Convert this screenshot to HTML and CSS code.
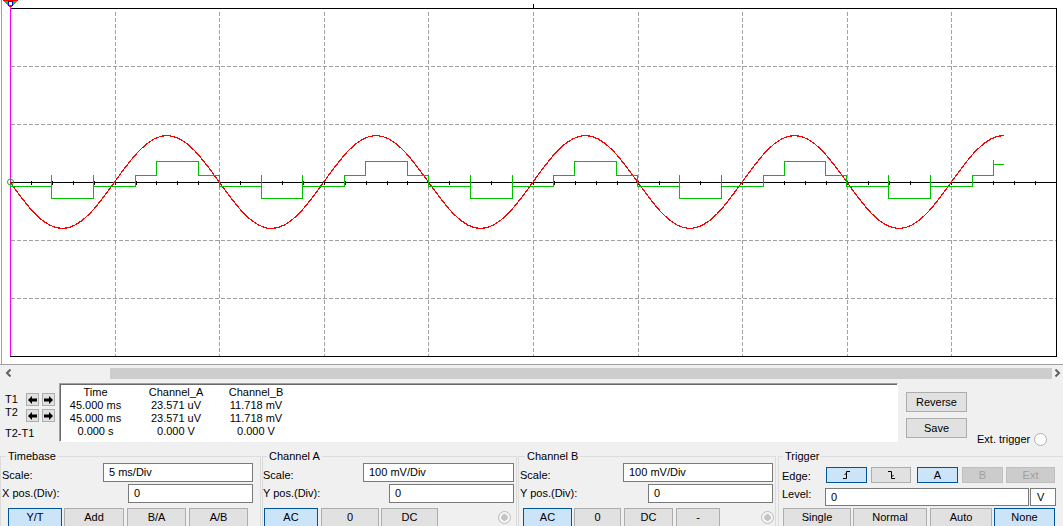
FILE: index.html
```html
<!DOCTYPE html>
<html>
<head>
<meta charset="utf-8">
<link rel="stylesheet" href="styles.css">
</head>
<body>
<div class="scope">
  <svg class="plot" width="1063" height="365" viewBox="0 0 1063 365">
    <g shape-rendering="crispEdges">
      <line x1="1.5" y1="0" x2="1.5" y2="364" stroke="#a0a0a0"/>
      <line x1="0" y1="364.5" x2="1063" y2="364.5" stroke="#a0a0a0"/>
      <g stroke="#a0a0a0" stroke-dasharray="4 2">
        <line x1="115.1" y1="12" x2="115.1" y2="356"/>
        <line x1="219.7" y1="12" x2="219.7" y2="356"/>
        <line x1="324.3" y1="12" x2="324.3" y2="356"/>
        <line x1="428.9" y1="12" x2="428.9" y2="356"/>
        <line x1="533.5" y1="12" x2="533.5" y2="356"/>
        <line x1="638.1" y1="12" x2="638.1" y2="356"/>
        <line x1="742.7" y1="12" x2="742.7" y2="356"/>
        <line x1="847.3" y1="12" x2="847.3" y2="356"/>
        <line x1="951.9" y1="12" x2="951.9" y2="356"/>
        <line x1="11" y1="66.5" x2="1056" y2="66.5"/>
        <line x1="11" y1="124.5" x2="1056" y2="124.5"/>
        <line x1="11" y1="240.5" x2="1056" y2="240.5"/>
        <line x1="11" y1="298.5" x2="1056" y2="298.5"/>
      </g>
      <g stroke="#000">
        <line x1="10" y1="8.5" x2="1057" y2="8.5"/>
        <line x1="10" y1="356.5" x2="1057" y2="356.5"/>
        <line x1="1056.5" y1="8" x2="1056.5" y2="357"/>
        <line x1="533.5" y1="4" x2="533.5" y2="8"/>
        <line x1="10" y1="182.5" x2="1057" y2="182.5"/>
        <line x1="10" y1="182.5" x2="1057" y2="182.5" stroke-width="4" stroke-dasharray="1 19.92"/>
      </g>
      <line x1="10.5" y1="0" x2="10.5" y2="356" stroke="#ff00ff"/>
      <path fill="none" stroke="#ff0000" stroke-width="1.2" d="M10,182 c17.06,23.82 33.37,46.5 52.3,46.5 c18.93,0 35.24,-22.68 52.3,-46.5 c17.06,-23.82 33.37,-46.5 52.3,-46.5 c18.93,0 35.24,22.68 52.3,46.5 c17.06,23.82 33.37,46.5 52.3,46.5 c18.93,0 35.24,-22.68 52.3,-46.5 c17.06,-23.82 33.37,-46.5 52.3,-46.5 c18.93,0 35.24,22.68 52.3,46.5 c17.06,23.82 33.37,46.5 52.3,46.5 c18.93,0 35.24,-22.68 52.3,-46.5 c17.06,-23.82 33.37,-46.5 52.3,-46.5 c18.93,0 35.24,22.68 52.3,46.5 c17.06,23.82 33.37,46.5 52.3,46.5 c18.93,0 35.24,-22.68 52.3,-46.5 c17.06,-23.82 33.37,-46.5 52.3,-46.5 c18.93,0 35.24,22.68 52.3,46.5 c17.06,23.82 33.37,46.5 52.3,46.5 c18.93,0 35.24,-22.68 52.3,-46.5 c17.06,-23.82 33.37,-46.5 52.3,-46.5"/>
      <path fill="none" stroke="#00c000" d="M10,186.5 h41.84V175V198.5h41.84V175V186.5h41.84V175.5h20.92V161.5h41.84V175.5h20.92V186.5 h41.84V175V198.5h41.84V175V186.5h41.84V175.5h20.92V161.5h41.84V175.5h20.92V186.5 h41.84V175V198.5h41.84V175V186.5h41.84V175.5h20.92V161.5h41.84V175.5h20.92V186.5 h41.84V175V198.5h41.84V175V186.5h41.84V175.5h20.92V161.5h41.84V175.5h20.92V186.5 h41.84V175V198.5h41.84V175V186.5h41.84V175.5h20.92V160V164.5h10.46"/>
      <polygon points="3,0 18,0 10.5,8" fill="#00d000"/>
      <line x1="3" y1="0.5" x2="18" y2="0.5" stroke="#ff0000"/>
      <rect x="8.5" y="1.5" width="4" height="4" fill="#fff" stroke="#0000ff"/>
      <rect x="9" y="5" width="3" height="2" fill="#ff0000"/>
    </g>
    <circle cx="10.5" cy="182" r="3" fill="none" stroke="#00c000"/>
  </svg>
</div>

<div class="hscroll">
  <div class="sb-btn"><svg width="7" height="8" viewBox="0 0 7 8"><polyline points="5.5,0.5 2,4 5.5,7.5" fill="none" stroke="#606060" stroke-width="2"/></svg></div>
  <div class="sb-track"><div class="sb-thumb"></div></div>
  <div class="sb-btn sb-right"><svg width="7" height="8" viewBox="0 0 7 8"><polyline points="1.5,0.5 5,4 1.5,7.5" fill="none" stroke="#606060" stroke-width="2"/></svg></div>
</div>

<div class="readrow">
  <div class="cursors">
    <div class="crow">
      <span class="clabel">T1</span>
      <span class="abtn"><svg width="9" height="8" viewBox="0 0 9 8"><path d="M0,4 L4,0 V2.5 H9 V5.5 H4 V8 Z"/></svg></span>
      <span class="abtn"><svg width="9" height="8" viewBox="0 0 9 8"><path d="M9,4 L5,0 V2.5 H0 V5.5 H5 V8 Z"/></svg></span>
    </div>
    <div class="crow c2">
      <span class="clabel">T2</span>
      <span class="abtn"><svg width="9" height="8" viewBox="0 0 9 8"><path d="M0,4 L4,0 V2.5 H9 V5.5 H4 V8 Z"/></svg></span>
      <span class="abtn"><svg width="9" height="8" viewBox="0 0 9 8"><path d="M9,4 L5,0 V2.5 H0 V5.5 H5 V8 Z"/></svg></span>
    </div>
    <div class="cdiff">T2-T1</div>
  </div>
  <div class="readout">
    <span>Time</span><span>Channel_A</span><span>Channel_B</span>
    <span>45.000 ms</span><span>23.571 uV</span><span>11.718 mV</span>
    <span>45.000 ms</span><span>23.571 uV</span><span>11.718 mV</span>
    <span>0.000 s</span><span>0.000 V</span><span>0.000 V</span>
  </div>
  <div class="side">
    <div class="btn wide">Reverse</div>
    <div class="btn wide">Save</div>
  </div>
  <div class="ext"><span>Ext. trigger</span><span class="radio"></span></div>
</div>

<div class="controls">
  <fieldset class="grp g-time">
    <legend>Timebase</legend>
    <div class="row r1"><span class="lbl">Scale:</span><div class="field w150">5 ms/Div</div></div>
    <div class="row r2"><span class="lbl">X pos.(Div):</span><div class="field w125">0</div></div>
    <div class="btns">
      <div class="btn sel w54">Y/T</div>
      <div class="btn w60 ml2">Add</div>
      <div class="btn w59 ml3">B/A</div>
      <div class="btn w59 ml3">A/B</div>
    </div>
  </fieldset>
  <fieldset class="grp g-a">
    <legend>Channel A</legend>
    <div class="row r1"><span class="lbl">Scale:</span><div class="field w151">100 mV/Div</div></div>
    <div class="row r2"><span class="lbl">Y pos.(Div):</span><div class="field w125">0</div></div>
    <div class="btns">
      <div class="btn sel w54">AC</div>
      <div class="btn w58 ml3">0</div>
      <div class="btn w57 ml2">DC</div>
      <span class="dradio"></span>
    </div>
  </fieldset>
  <fieldset class="grp g-b">
    <legend>Channel B</legend>
    <div class="row r1"><span class="lbl">Scale:</span><div class="field w150">100 mV/Div</div></div>
    <div class="row r2"><span class="lbl">Y pos.(Div):</span><div class="field w125">0</div></div>
    <div class="btns">
      <div class="btn sel w49">AC</div>
      <div class="btn w47 ml2">0</div>
      <div class="btn w49 ml3">DC</div>
      <div class="btn w44 ml3">-</div>
      <span class="dradio"></span>
    </div>
  </fieldset>
  <fieldset class="grp g-trig">
    <legend>Trigger</legend>
    <div class="row r1">
      <span class="lbl">Edge:</span>
      <div class="btn sel w41"><svg width="9" height="8" viewBox="0 0 9 8"><path d="M1,7.5 H4.5 V0.5 H8 M2.5,4 L4.5,2" fill="none" stroke="#000"/></svg></div>
      <div class="btn w40 ml4"><svg width="9" height="8" viewBox="0 0 9 8"><path d="M1,0.5 H4.5 V7.5 H8 M4.5,6 L6.5,4" fill="none" stroke="#000"/></svg></div>
      <div class="btn sel w41 ml6">A</div>
      <div class="btn dis w41 ml4">B</div>
      <div class="btn dis w49 ml3">Ext</div>
    </div>
    <div class="row r2">
      <span class="lbl">Level:</span>
      <div class="field w204">0</div>
      <div class="field vbox">V</div>
    </div>
    <div class="btns">
      <div class="btn w68">Single</div>
      <div class="btn w74 ml2">Normal</div>
      <div class="btn w62 ml3">Auto</div>
      <div class="btn sel w61 ml2">None</div>
    </div>
  </fieldset>
</div>
</body>
</html>
```

FILE: styles.css
```css
* { box-sizing: border-box; }

body {
  margin: 0;
  width: 1063px;
  height: 526px;
  overflow: hidden;
  background: #f0f0f0;
  font: 11px/13px "Liberation Sans", Arial, sans-serif;
  color: #000;
}

/* scope canvas */
.scope { height: 365px; background: #fff; }
.scope svg { display: block; }

/* horizontal scrollbar */
.hscroll { display: flex; height: 16px; }
.sb-btn { flex: none; width: 17px; display: flex; align-items: center; justify-content: center; }
.sb-right { width: 11px; }
.sb-track { flex: none; width: 1035px; padding: 3px 0 0 93px; }
.sb-thumb { width: 942px; height: 11px; background: #cdcdcd; }

/* cursor / readout row */
.readrow { display: flex; height: 64px; }
.cursors { flex: none; width: 57px; padding-top: 12px; }
.crow { display: flex; align-items: center; height: 13px; }
.crow + .crow { margin-top: 3px; }
.clabel { width: 26px; padding-left: 5px; }
.c2 .clabel { margin-top: -6px; }
.abtn {
  width: 13px; height: 13px;
  border: 1px solid #adadad; background: #e1e1e1;
  display: flex; align-items: center; justify-content: center;
}
.abtn + .abtn { margin-left: 3px; }
.cdiff { padding-left: 5px; margin-top: 5px; }

.readout {
  flex: none;
  width: 839px; height: 59px;
  margin: 2px 0 0 2px;
  background: #fff;
  border: 1px solid;
  border-color: #a0a0a0 #fff #fff #a0a0a0;
  box-shadow: inset 1px 1px 0 #696969;
  display: grid;
  grid-template-columns: 71px 90px 70px;
  align-content: start;
  padding-top: 2px;
  text-align: center;
}

.side { flex: none; margin-left: 8px; padding-top: 11px; }
.side .btn + .btn { margin-top: 6px; }
.ext { flex: none; display: flex; align-items: center; height: 13px; margin: 52px 0 0 10px; }
.radio {
  margin-left: 4px; width: 13px; height: 13px; border-radius: 50%;
  border: 1px solid #b0b0b0; background: #fff;
}

/* buttons and fields */
.btn {
  flex: none;
  height: 19px;
  border: 1px solid #adadad;
  background: #e1e1e1;
  text-align: center;
  line-height: 17px;
}
.btn.wide { width: 61px; height: 20px; line-height: 18px; }
.btn.sel { background: #cce4f7; border-color: #005499; }
.btn.dis { background: #cccccc; border-color: #bfbfbf; color: #a0a0a0; }
.field {
  flex: none;
  height: 19px;
  background: #fff;
  border: 1px solid #7a7a7a;
  padding-left: 5px;
  line-height: 17px;
}
.vbox { width: 26px; margin-left: 1px; padding-left: 6px; }

.w40 { width: 40px; } .w41 { width: 41px; } .w44 { width: 44px; }
.w47 { width: 47px; } .w49 { width: 49px; } .w54 { width: 54px; }
.w57 { width: 57px; } .w58 { width: 58px; } .w59 { width: 59px; }
.w60 { width: 60px; } .w61 { width: 61px; } .w62 { width: 62px; }
.w68 { width: 68px; } .w74 { width: 74px; } .w125 { width: 125px; }
.w150 { width: 150px; } .w151 { width: 151px; } .w204 { width: 204px; }
.ml2 { margin-left: 2px; } .ml3 { margin-left: 3px; }
.ml4 { margin-left: 4px; } .ml6 { margin-left: 6px; }

/* control groups */
.controls { display: flex; height: 81px; }
.grp {
  flex: none;
  margin: 5px 0 0;
  padding: 0;
  min-width: 0;
  height: 80px;
  border: 1px solid #dcdcdc;
  border-bottom: none;
}
.grp legend { padding: 0 2px; line-height: 13px; }
.row { display: flex; align-items: center; height: 19px; }
.row + .row { margin-top: 2px; }
.lbl { flex: none; }
.r1 .lbl { padding-top: 5px; }
.btns { display: flex; align-items: center; height: 19px; margin-top: 5px; }

.g-time { width: 261px; margin-right: 1px; }
.g-time legend { margin-left: 5px; }
.g-time .lbl { padding-left: 1px; }
.g-time .r1 .lbl { width: 102px; }
.g-time .r2 .lbl { width: 127px; }
.g-time .btns { padding-left: 7px; }

.g-a { width: 255px; margin-right: 1px; }
.g-a legend { margin-left: 4px; }
.g-a .r1 .lbl { width: 100px; }
.g-a .r2 .lbl { width: 126px; }
.g-a .btns { padding-left: 1px; }
.g-a .dradio { margin-left: 60px; }

.g-b { width: 258px; margin-right: 2px; }
.g-b legend { margin-left: 6px; }
.g-b .lbl { padding-left: 1px; }
.g-b .r1 .lbl { width: 104px; }
.g-b .r2 .lbl { width: 129px; }
.g-b .btns { padding-left: 4px; }
.g-b .dradio { margin-left: 41px; }

.dradio {
  flex: none;
  width: 13px; height: 13px; border-radius: 50%;
  border: 1px solid #bcbcbc;
  background: radial-gradient(circle, #c4c4c4 0 3px, #f4f4f4 3.5px);
}

.g-trig { width: 290px; }
.g-trig legend { margin-left: 4px; }
.g-trig .r1 { margin-top: 4px; height: 16px; }
.g-trig .r1 .btn { height: 16px; line-height: 14px; display: flex; align-items: center; justify-content: center; }
.g-trig .r1 .lbl { width: 47px; padding: 2px 0 0 3px; }
.g-trig .r2 { margin-top: 5px; height: 18px; }
.g-trig .r2 .field { height: 18px; line-height: 16px; }
.g-trig .r2 .lbl { width: 46px; padding-left: 3px; margin-top: -6px; }
.g-trig .btns { margin-top: 2px; padding-left: 4px; }
```
